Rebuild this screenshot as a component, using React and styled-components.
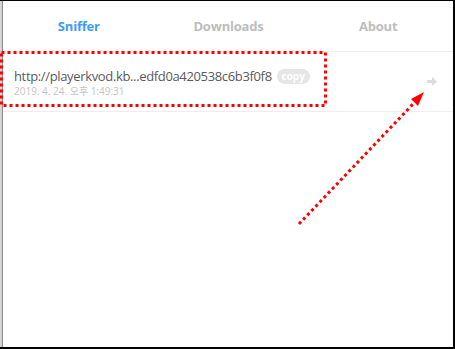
import React from 'react';
import styled, { createGlobalStyle } from 'styled-components';

const GlobalStyle = createGlobalStyle`
  html, body {
    margin: 0;
    padding: 0;
    background: #fff;
  }
  body {
    font-family: 'Open Sans', 'Noto Sans CJK KR', sans-serif;
  }
`;

const Frame = styled.div`
  position: relative;
  display: flex;
  width: 455px;
  height: 349px;
  box-sizing: border-box;
  border-top: 1px solid #000;
  border-right: 2px solid #000;
  border-bottom: 2px solid #000;
  overflow: hidden;
`;

const LeftStrip = styled.div`
  width: 2px;
  flex-shrink: 0;
  background: #d4d4d4;
  border-right: 1px solid #8a8a8a;
`;

const Popup = styled.div`
  flex: 1;
  display: flex;
  flex-direction: column;
  background: #fff;
`;

const Tabs = styled.div`
  display: grid;
  grid-template-columns: repeat(3, 1fr);
  height: 50px;
  border-bottom: 1px solid #eeeeee;
  padding-left: 1px;
`;

const Tab = styled.div`
  display: flex;
  align-items: center;
  justify-content: center;
  font-size: 13px;
  font-weight: 700;
  letter-spacing: -0.2px;
  color: ${({ active }) => (active ? '#3d9cf5' : '#bdbdbd')};
`;

const Row = styled.div`
  display: flex;
  align-items: center;
  height: 59px;
  padding: 0 16px 0 11px;
  border-bottom: 1px solid #eeeeee;
`;

const Info = styled.div`
  flex: 1;
  display: flex;
  flex-direction: column;
  padding-top: 2px;
`;

const UrlLine = styled.div`
  display: flex;
  align-items: center;
  gap: 5px;
`;

const Url = styled.span`
  font-size: 13px;
  letter-spacing: -0.35px;
  color: #5a5a5a;
  white-space: nowrap;
`;

const CopyBadge = styled.span`
  display: inline-flex;
  align-items: center;
  justify-content: center;
  width: 33px;
  height: 15px;
  border-radius: 8px;
  background: #e6e6e6;
  color: #fff;
  font-size: 10px;
  font-weight: 700;
`;

const Time = styled.div`
  font-size: 10px;
  line-height: 13px;
  color: #c4c4c4;
`;

const Go = styled.div`
  display: flex;
  align-items: center;
  color: #dcdcdc;
`;

const Overlay = styled.svg`
  position: absolute;
  left: 0;
  top: -1px;
  pointer-events: none;
`;

export default function App() {
  return (
    <>
      <GlobalStyle />
      <Frame>
        <LeftStrip />
        <Popup>
          <Tabs>
            <Tab active>Sniffer</Tab>
            <Tab>Downloads</Tab>
            <Tab>About</Tab>
          </Tabs>
          <Row>
            <Info>
              <UrlLine>
                <Url>http://playerkvod.kb...edfd0a420538c6b3f0f8</Url>
                <CopyBadge>copy</CopyBadge>
              </UrlLine>
              <Time>2019. 4. 24. 오후 1:49:31</Time>
            </Info>
            <Go>
              <svg width="10" height="9" viewBox="0 0 10 9">
                <path d="M0 3h5V0l5 4.5L5 9V6H0z" fill="currentColor" />
              </svg>
            </Go>
          </Row>
        </Popup>
        <Overlay width="455" height="349" viewBox="0 0 455 349">
          <rect x="1.5" y="52.5" width="324" height="53" fill="none" stroke="#ff0000" strokeWidth="3" strokeDasharray="3 3" />
          <line x1="299" y1="224" x2="414" y2="103" stroke="#ff0000" strokeWidth="3" strokeDasharray="3 3" />
          <path d="M424 92 L411 99 L418 106 Z" fill="#ff0000" />
        </Overlay>
      </Frame>
    </>
  );
}
